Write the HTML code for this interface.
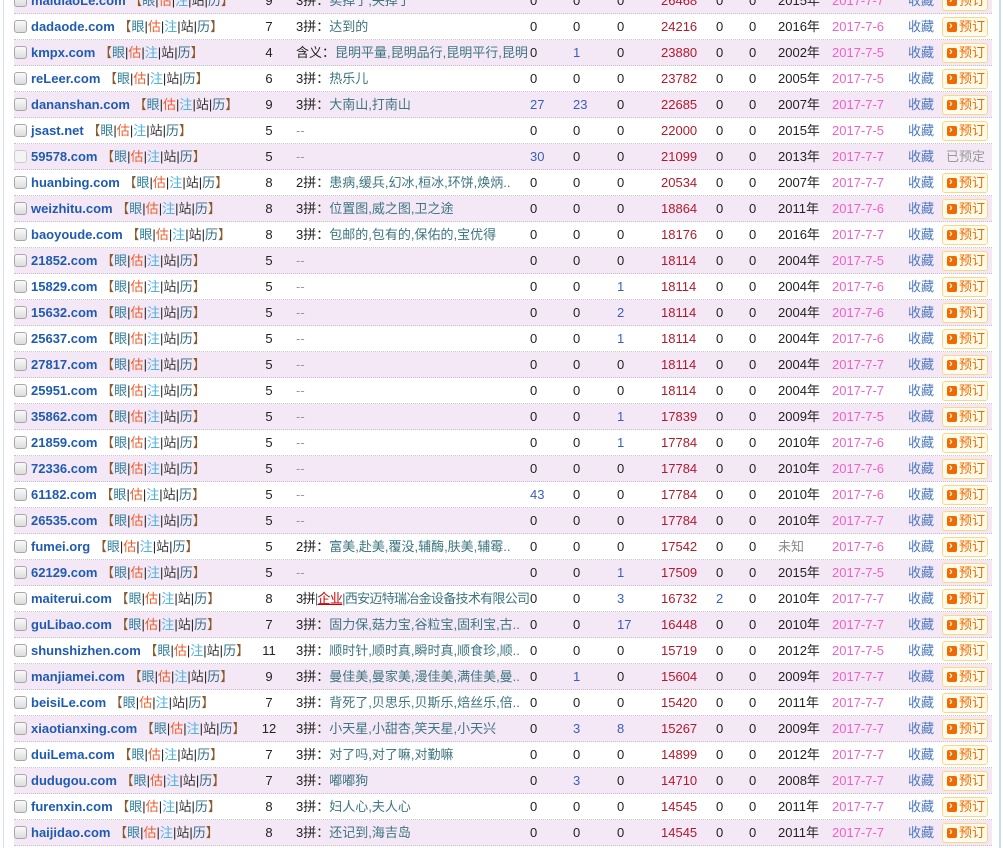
<!DOCTYPE html>
<html><head><meta charset="utf-8"><style>
body{margin:0;width:1003px;height:848px;overflow:hidden;background:#fff;font-family:"Liberation Sans","Noto Sans CJK SC",sans-serif;font-size:13px;color:#222;position:relative}
.lb{position:absolute;left:3px;top:0;width:1px;height:848px;background:#d6e2ee}
.rb{position:absolute;left:999px;top:0;width:2px;height:848px;background:#c8dcef}
.r{position:absolute;left:14px;width:978px;height:25px;border-bottom:1px dotted #c4c4c4;line-height:25px;white-space:nowrap}
.r.k{background:#f5e8f6}
.r>span{position:absolute;top:0}
.cb{left:0;top:6px!important;width:11px;height:11px;border:1px solid #a8a8a8;border-radius:3px;background:linear-gradient(#fafafa,#dcdcdc)}
.cb.g{border-color:#ccc;background:#f4f4f4}
.d{left:17px}
.d b{color:#1f5bb0;font-size:13px}
.q{color:#8a5a2a}.q1{color:#2f7f9a}.q2{color:#f05a28}.q3{color:#4ab3e0}.q4{color:#333}.q5{color:#2f6a80}
.n{left:245px;width:20px;text-align:center}
.m{left:282px;color:#3d7580;max-width:232px;overflow:hidden}
.m i{font-style:normal;color:#222}
.m .x{color:#999}
.a{left:516px}.b{left:559px}.c{left:603px}
.bl{color:#3a5fb8}
.p{left:647px;color:#b01a2c}
.e1{left:702px}.e2{left:735px}
.y{left:764px}
.dt{left:818px;color:#f060c8}
.f{left:894px;color:#4a78c0}
.bt{left:928px;top:3px!important;height:18px;line-height:18px;width:42px;border:1px solid #fbd68a;border-radius:3px;background:#fffbea;color:#ee6a00;text-align:right;padding-right:2px}
.bt::before{content:"";position:absolute;left:4px;top:4px;width:10px;height:10px;background:#f06a00;border-radius:2px}
.bt::after{content:"›";position:absolute;left:6px;top:-1px;color:#fff;font-size:11px;font-weight:bold}
.ys{left:932px;color:#999}
</style></head><body>
<div class="lb"></div><div class="rb"></div>

<div class="r k" style="top:-12px"><span class="cb"></span><span class="d"><b>maidiaoLe.com</b> <span class="q">【</span><span class="q1">眼</span>|<span class="q2">估</span>|<span class="q3">注</span>|<span class="q4">站</span>|<span class="q5">历</span><span class="q">】</span></span><span class="n">9</span><span class="m"><i>3拼：</i>卖掉了,失掉了</span><span class="a">0</span><span class="b">0</span><span class="c">0</span><span class="p">26468</span><span class="e1">0</span><span class="e2">0</span><span class="y">2015年</span><span class="dt">2017-7-7</span><span class="f">收藏</span><span class="bt">预订</span></div>

<div class="r" style="top:14px"><span class="cb"></span><span class="d"><b>dadaode.com</b> <span class="q">【</span><span class="q1">眼</span>|<span class="q2">估</span>|<span class="q3">注</span>|<span class="q4">站</span>|<span class="q5">历</span><span class="q">】</span></span><span class="n">7</span><span class="m"><i>3拼：</i>达到的</span><span class="a">0</span><span class="b">0</span><span class="c">0</span><span class="p">24216</span><span class="e1">0</span><span class="e2">0</span><span class="y">2016年</span><span class="dt">2017-7-6</span><span class="f">收藏</span><span class="bt">预订</span></div>

<div class="r k" style="top:40px"><span class="cb"></span><span class="d"><b>kmpx.com</b> <span class="q">【</span><span class="q1">眼</span>|<span class="q2">估</span>|<span class="q3">注</span>|<span class="q4">站</span>|<span class="q5">历</span><span class="q">】</span></span><span class="n">4</span><span class="m"><i>含义：</i>昆明平量,昆明品行,昆明平行,昆明..</span><span class="a">0</span><span class="b bl">1</span><span class="c">0</span><span class="p">23880</span><span class="e1">0</span><span class="e2">0</span><span class="y">2002年</span><span class="dt">2017-7-5</span><span class="f">收藏</span><span class="bt">预订</span></div>

<div class="r" style="top:66px"><span class="cb"></span><span class="d"><b>reLeer.com</b> <span class="q">【</span><span class="q1">眼</span>|<span class="q2">估</span>|<span class="q3">注</span>|<span class="q4">站</span>|<span class="q5">历</span><span class="q">】</span></span><span class="n">6</span><span class="m"><i>3拼：</i>热乐儿</span><span class="a">0</span><span class="b">0</span><span class="c">0</span><span class="p">23782</span><span class="e1">0</span><span class="e2">0</span><span class="y">2005年</span><span class="dt">2017-7-5</span><span class="f">收藏</span><span class="bt">预订</span></div>

<div class="r k" style="top:92px"><span class="cb"></span><span class="d"><b>dananshan.com</b> <span class="q">【</span><span class="q1">眼</span>|<span class="q2">估</span>|<span class="q3">注</span>|<span class="q4">站</span>|<span class="q5">历</span><span class="q">】</span></span><span class="n">9</span><span class="m"><i>3拼：</i>大南山,打南山</span><span class="a bl">27</span><span class="b bl">23</span><span class="c">0</span><span class="p">22685</span><span class="e1">0</span><span class="e2">0</span><span class="y">2007年</span><span class="dt">2017-7-7</span><span class="f">收藏</span><span class="bt">预订</span></div>

<div class="r" style="top:118px"><span class="cb"></span><span class="d"><b>jsast.net</b> <span class="q">【</span><span class="q1">眼</span>|<span class="q2">估</span>|<span class="q3">注</span>|<span class="q4">站</span>|<span class="q5">历</span><span class="q">】</span></span><span class="n">5</span><span class="m"><span class="x">--</span></span><span class="a">0</span><span class="b">0</span><span class="c">0</span><span class="p">22000</span><span class="e1">0</span><span class="e2">0</span><span class="y">2015年</span><span class="dt">2017-7-5</span><span class="f">收藏</span><span class="bt">预订</span></div>

<div class="r k" style="top:144px"><span class="cb g"></span><span class="d"><b>59578.com</b> <span class="q">【</span><span class="q1">眼</span>|<span class="q2">估</span>|<span class="q3">注</span>|<span class="q4">站</span>|<span class="q5">历</span><span class="q">】</span></span><span class="n">5</span><span class="m"><span class="x">--</span></span><span class="a bl">30</span><span class="b">0</span><span class="c">0</span><span class="p">21099</span><span class="e1">0</span><span class="e2">0</span><span class="y">2013年</span><span class="dt">2017-7-7</span><span class="f">收藏</span><span class="ys">已预定</span></div>

<div class="r" style="top:170px"><span class="cb"></span><span class="d"><b>huanbing.com</b> <span class="q">【</span><span class="q1">眼</span>|<span class="q2">估</span>|<span class="q3">注</span>|<span class="q4">站</span>|<span class="q5">历</span><span class="q">】</span></span><span class="n">8</span><span class="m"><i>2拼：</i>患病,缓兵,幻冰,桓冰,环饼,焕炳..</span><span class="a">0</span><span class="b">0</span><span class="c">0</span><span class="p">20534</span><span class="e1">0</span><span class="e2">0</span><span class="y">2007年</span><span class="dt">2017-7-7</span><span class="f">收藏</span><span class="bt">预订</span></div>

<div class="r k" style="top:196px"><span class="cb"></span><span class="d"><b>weizhitu.com</b> <span class="q">【</span><span class="q1">眼</span>|<span class="q2">估</span>|<span class="q3">注</span>|<span class="q4">站</span>|<span class="q5">历</span><span class="q">】</span></span><span class="n">8</span><span class="m"><i>3拼：</i>位置图,威之图,卫之途</span><span class="a">0</span><span class="b">0</span><span class="c">0</span><span class="p">18864</span><span class="e1">0</span><span class="e2">0</span><span class="y">2011年</span><span class="dt">2017-7-6</span><span class="f">收藏</span><span class="bt">预订</span></div>

<div class="r" style="top:222px"><span class="cb"></span><span class="d"><b>baoyoude.com</b> <span class="q">【</span><span class="q1">眼</span>|<span class="q2">估</span>|<span class="q3">注</span>|<span class="q4">站</span>|<span class="q5">历</span><span class="q">】</span></span><span class="n">8</span><span class="m"><i>3拼：</i>包邮的,包有的,保佑的,宝优得</span><span class="a">0</span><span class="b">0</span><span class="c">0</span><span class="p">18176</span><span class="e1">0</span><span class="e2">0</span><span class="y">2016年</span><span class="dt">2017-7-7</span><span class="f">收藏</span><span class="bt">预订</span></div>

<div class="r k" style="top:248px"><span class="cb"></span><span class="d"><b>21852.com</b> <span class="q">【</span><span class="q1">眼</span>|<span class="q2">估</span>|<span class="q3">注</span>|<span class="q4">站</span>|<span class="q5">历</span><span class="q">】</span></span><span class="n">5</span><span class="m"><span class="x">--</span></span><span class="a">0</span><span class="b">0</span><span class="c">0</span><span class="p">18114</span><span class="e1">0</span><span class="e2">0</span><span class="y">2004年</span><span class="dt">2017-7-5</span><span class="f">收藏</span><span class="bt">预订</span></div>

<div class="r" style="top:274px"><span class="cb"></span><span class="d"><b>15829.com</b> <span class="q">【</span><span class="q1">眼</span>|<span class="q2">估</span>|<span class="q3">注</span>|<span class="q4">站</span>|<span class="q5">历</span><span class="q">】</span></span><span class="n">5</span><span class="m"><span class="x">--</span></span><span class="a">0</span><span class="b">0</span><span class="c bl">1</span><span class="p">18114</span><span class="e1">0</span><span class="e2">0</span><span class="y">2004年</span><span class="dt">2017-7-6</span><span class="f">收藏</span><span class="bt">预订</span></div>

<div class="r k" style="top:300px"><span class="cb"></span><span class="d"><b>15632.com</b> <span class="q">【</span><span class="q1">眼</span>|<span class="q2">估</span>|<span class="q3">注</span>|<span class="q4">站</span>|<span class="q5">历</span><span class="q">】</span></span><span class="n">5</span><span class="m"><span class="x">--</span></span><span class="a">0</span><span class="b">0</span><span class="c bl">2</span><span class="p">18114</span><span class="e1">0</span><span class="e2">0</span><span class="y">2004年</span><span class="dt">2017-7-6</span><span class="f">收藏</span><span class="bt">预订</span></div>

<div class="r" style="top:326px"><span class="cb"></span><span class="d"><b>25637.com</b> <span class="q">【</span><span class="q1">眼</span>|<span class="q2">估</span>|<span class="q3">注</span>|<span class="q4">站</span>|<span class="q5">历</span><span class="q">】</span></span><span class="n">5</span><span class="m"><span class="x">--</span></span><span class="a">0</span><span class="b">0</span><span class="c bl">1</span><span class="p">18114</span><span class="e1">0</span><span class="e2">0</span><span class="y">2004年</span><span class="dt">2017-7-6</span><span class="f">收藏</span><span class="bt">预订</span></div>

<div class="r k" style="top:352px"><span class="cb"></span><span class="d"><b>27817.com</b> <span class="q">【</span><span class="q1">眼</span>|<span class="q2">估</span>|<span class="q3">注</span>|<span class="q4">站</span>|<span class="q5">历</span><span class="q">】</span></span><span class="n">5</span><span class="m"><span class="x">--</span></span><span class="a">0</span><span class="b">0</span><span class="c">0</span><span class="p">18114</span><span class="e1">0</span><span class="e2">0</span><span class="y">2004年</span><span class="dt">2017-7-7</span><span class="f">收藏</span><span class="bt">预订</span></div>

<div class="r" style="top:378px"><span class="cb"></span><span class="d"><b>25951.com</b> <span class="q">【</span><span class="q1">眼</span>|<span class="q2">估</span>|<span class="q3">注</span>|<span class="q4">站</span>|<span class="q5">历</span><span class="q">】</span></span><span class="n">5</span><span class="m"><span class="x">--</span></span><span class="a">0</span><span class="b">0</span><span class="c">0</span><span class="p">18114</span><span class="e1">0</span><span class="e2">0</span><span class="y">2004年</span><span class="dt">2017-7-7</span><span class="f">收藏</span><span class="bt">预订</span></div>

<div class="r k" style="top:404px"><span class="cb"></span><span class="d"><b>35862.com</b> <span class="q">【</span><span class="q1">眼</span>|<span class="q2">估</span>|<span class="q3">注</span>|<span class="q4">站</span>|<span class="q5">历</span><span class="q">】</span></span><span class="n">5</span><span class="m"><span class="x">--</span></span><span class="a">0</span><span class="b">0</span><span class="c bl">1</span><span class="p">17839</span><span class="e1">0</span><span class="e2">0</span><span class="y">2009年</span><span class="dt">2017-7-5</span><span class="f">收藏</span><span class="bt">预订</span></div>

<div class="r" style="top:430px"><span class="cb"></span><span class="d"><b>21859.com</b> <span class="q">【</span><span class="q1">眼</span>|<span class="q2">估</span>|<span class="q3">注</span>|<span class="q4">站</span>|<span class="q5">历</span><span class="q">】</span></span><span class="n">5</span><span class="m"><span class="x">--</span></span><span class="a">0</span><span class="b">0</span><span class="c bl">1</span><span class="p">17784</span><span class="e1">0</span><span class="e2">0</span><span class="y">2010年</span><span class="dt">2017-7-6</span><span class="f">收藏</span><span class="bt">预订</span></div>

<div class="r k" style="top:456px"><span class="cb"></span><span class="d"><b>72336.com</b> <span class="q">【</span><span class="q1">眼</span>|<span class="q2">估</span>|<span class="q3">注</span>|<span class="q4">站</span>|<span class="q5">历</span><span class="q">】</span></span><span class="n">5</span><span class="m"><span class="x">--</span></span><span class="a">0</span><span class="b">0</span><span class="c">0</span><span class="p">17784</span><span class="e1">0</span><span class="e2">0</span><span class="y">2010年</span><span class="dt">2017-7-6</span><span class="f">收藏</span><span class="bt">预订</span></div>

<div class="r" style="top:482px"><span class="cb"></span><span class="d"><b>61182.com</b> <span class="q">【</span><span class="q1">眼</span>|<span class="q2">估</span>|<span class="q3">注</span>|<span class="q4">站</span>|<span class="q5">历</span><span class="q">】</span></span><span class="n">5</span><span class="m"><span class="x">--</span></span><span class="a bl">43</span><span class="b">0</span><span class="c">0</span><span class="p">17784</span><span class="e1">0</span><span class="e2">0</span><span class="y">2010年</span><span class="dt">2017-7-6</span><span class="f">收藏</span><span class="bt">预订</span></div>

<div class="r k" style="top:508px"><span class="cb"></span><span class="d"><b>26535.com</b> <span class="q">【</span><span class="q1">眼</span>|<span class="q2">估</span>|<span class="q3">注</span>|<span class="q4">站</span>|<span class="q5">历</span><span class="q">】</span></span><span class="n">5</span><span class="m"><span class="x">--</span></span><span class="a">0</span><span class="b">0</span><span class="c">0</span><span class="p">17784</span><span class="e1">0</span><span class="e2">0</span><span class="y">2010年</span><span class="dt">2017-7-7</span><span class="f">收藏</span><span class="bt">预订</span></div>

<div class="r" style="top:534px"><span class="cb"></span><span class="d"><b>fumei.org</b> <span class="q">【</span><span class="q1">眼</span>|<span class="q2">估</span>|<span class="q3">注</span>|<span class="q4">站</span>|<span class="q5">历</span><span class="q">】</span></span><span class="n">5</span><span class="m"><i>2拼：</i>富美,赴美,覆没,辅酶,肤美,辅霉..</span><span class="a">0</span><span class="b">0</span><span class="c">0</span><span class="p">17542</span><span class="e1">0</span><span class="e2">0</span><span class="y" style="color:#888">未知</span><span class="dt">2017-7-6</span><span class="f">收藏</span><span class="bt">预订</span></div>

<div class="r k" style="top:560px"><span class="cb"></span><span class="d"><b>62129.com</b> <span class="q">【</span><span class="q1">眼</span>|<span class="q2">估</span>|<span class="q3">注</span>|<span class="q4">站</span>|<span class="q5">历</span><span class="q">】</span></span><span class="n">5</span><span class="m"><span class="x">--</span></span><span class="a">0</span><span class="b">0</span><span class="c bl">1</span><span class="p">17509</span><span class="e1">0</span><span class="e2">0</span><span class="y">2015年</span><span class="dt">2017-7-5</span><span class="f">收藏</span><span class="bt">预订</span></div>

<div class="r" style="top:586px"><span class="cb"></span><span class="d"><b>maiterui.com</b> <span class="q">【</span><span class="q1">眼</span>|<span class="q2">估</span>|<span class="q3">注</span>|<span class="q4">站</span>|<span class="q5">历</span><span class="q">】</span></span><span class="n">8</span><span class="m" style="letter-spacing:-0.7px;max-width:236px"><i>3拼</i>|<span style="color:#c00;text-decoration:underline">企业</span>|<span style="color:#3d7580">西安迈特瑞冶金设备技术有限公司</span></span><span class="a">0</span><span class="b">0</span><span class="c bl">3</span><span class="p">16732</span><span class="e1 bl">2</span><span class="e2">0</span><span class="y">2010年</span><span class="dt">2017-7-7</span><span class="f">收藏</span><span class="bt">预订</span></div>

<div class="r k" style="top:612px"><span class="cb"></span><span class="d"><b>guLibao.com</b> <span class="q">【</span><span class="q1">眼</span>|<span class="q2">估</span>|<span class="q3">注</span>|<span class="q4">站</span>|<span class="q5">历</span><span class="q">】</span></span><span class="n">7</span><span class="m"><i>3拼：</i>固力保,菇力宝,谷粒宝,固利宝,古..</span><span class="a">0</span><span class="b">0</span><span class="c bl">17</span><span class="p">16448</span><span class="e1">0</span><span class="e2">0</span><span class="y">2010年</span><span class="dt">2017-7-7</span><span class="f">收藏</span><span class="bt">预订</span></div>

<div class="r" style="top:638px"><span class="cb"></span><span class="d"><b>shunshizhen.com</b> <span class="q">【</span><span class="q1">眼</span>|<span class="q2">估</span>|<span class="q3">注</span>|<span class="q4">站</span>|<span class="q5">历</span><span class="q">】</span></span><span class="n">11</span><span class="m"><i>3拼：</i>顺时针,顺时真,瞬时真,顺食珍,顺..</span><span class="a">0</span><span class="b">0</span><span class="c">0</span><span class="p">15719</span><span class="e1">0</span><span class="e2">0</span><span class="y">2012年</span><span class="dt">2017-7-5</span><span class="f">收藏</span><span class="bt">预订</span></div>

<div class="r k" style="top:664px"><span class="cb"></span><span class="d"><b>manjiamei.com</b> <span class="q">【</span><span class="q1">眼</span>|<span class="q2">估</span>|<span class="q3">注</span>|<span class="q4">站</span>|<span class="q5">历</span><span class="q">】</span></span><span class="n">9</span><span class="m"><i>3拼：</i>曼佳美,曼家美,漫佳美,满佳美,曼..</span><span class="a">0</span><span class="b bl">1</span><span class="c">0</span><span class="p">15604</span><span class="e1">0</span><span class="e2">0</span><span class="y">2009年</span><span class="dt">2017-7-7</span><span class="f">收藏</span><span class="bt">预订</span></div>

<div class="r" style="top:690px"><span class="cb"></span><span class="d"><b>beisiLe.com</b> <span class="q">【</span><span class="q1">眼</span>|<span class="q2">估</span>|<span class="q3">注</span>|<span class="q4">站</span>|<span class="q5">历</span><span class="q">】</span></span><span class="n">7</span><span class="m"><i>3拼：</i>背死了,贝思乐,贝斯乐,焙丝乐,倍..</span><span class="a">0</span><span class="b">0</span><span class="c">0</span><span class="p">15420</span><span class="e1">0</span><span class="e2">0</span><span class="y">2011年</span><span class="dt">2017-7-7</span><span class="f">收藏</span><span class="bt">预订</span></div>

<div class="r k" style="top:716px"><span class="cb"></span><span class="d"><b>xiaotianxing.com</b> <span class="q">【</span><span class="q1">眼</span>|<span class="q2">估</span>|<span class="q3">注</span>|<span class="q4">站</span>|<span class="q5">历</span><span class="q">】</span></span><span class="n">12</span><span class="m"><i>3拼：</i>小天星,小甜杏,笑天星,小天兴</span><span class="a">0</span><span class="b bl">3</span><span class="c bl">8</span><span class="p">15267</span><span class="e1">0</span><span class="e2">0</span><span class="y">2009年</span><span class="dt">2017-7-7</span><span class="f">收藏</span><span class="bt">预订</span></div>

<div class="r" style="top:742px"><span class="cb"></span><span class="d"><b>duiLema.com</b> <span class="q">【</span><span class="q1">眼</span>|<span class="q2">估</span>|<span class="q3">注</span>|<span class="q4">站</span>|<span class="q5">历</span><span class="q">】</span></span><span class="n">7</span><span class="m"><i>3拼：</i>对了吗,对了嘛,对勤嘛</span><span class="a">0</span><span class="b">0</span><span class="c">0</span><span class="p">14899</span><span class="e1">0</span><span class="e2">0</span><span class="y">2012年</span><span class="dt">2017-7-7</span><span class="f">收藏</span><span class="bt">预订</span></div>

<div class="r k" style="top:768px"><span class="cb"></span><span class="d"><b>dudugou.com</b> <span class="q">【</span><span class="q1">眼</span>|<span class="q2">估</span>|<span class="q3">注</span>|<span class="q4">站</span>|<span class="q5">历</span><span class="q">】</span></span><span class="n">7</span><span class="m"><i>3拼：</i>嘟嘟狗</span><span class="a">0</span><span class="b bl">3</span><span class="c">0</span><span class="p">14710</span><span class="e1">0</span><span class="e2">0</span><span class="y">2008年</span><span class="dt">2017-7-7</span><span class="f">收藏</span><span class="bt">预订</span></div>

<div class="r" style="top:794px"><span class="cb"></span><span class="d"><b>furenxin.com</b> <span class="q">【</span><span class="q1">眼</span>|<span class="q2">估</span>|<span class="q3">注</span>|<span class="q4">站</span>|<span class="q5">历</span><span class="q">】</span></span><span class="n">8</span><span class="m"><i>3拼：</i>妇人心,夫人心</span><span class="a">0</span><span class="b">0</span><span class="c">0</span><span class="p">14545</span><span class="e1">0</span><span class="e2">0</span><span class="y">2011年</span><span class="dt">2017-7-7</span><span class="f">收藏</span><span class="bt">预订</span></div>

<div class="r k" style="top:820px"><span class="cb"></span><span class="d"><b>haijidao.com</b> <span class="q">【</span><span class="q1">眼</span>|<span class="q2">估</span>|<span class="q3">注</span>|<span class="q4">站</span>|<span class="q5">历</span><span class="q">】</span></span><span class="n">8</span><span class="m"><i>3拼：</i>还记到,海吉岛</span><span class="a">0</span><span class="b">0</span><span class="c">0</span><span class="p">14545</span><span class="e1">0</span><span class="e2">0</span><span class="y">2011年</span><span class="dt">2017-7-7</span><span class="f">收藏</span><span class="bt">预订</span></div>

</body></html>
